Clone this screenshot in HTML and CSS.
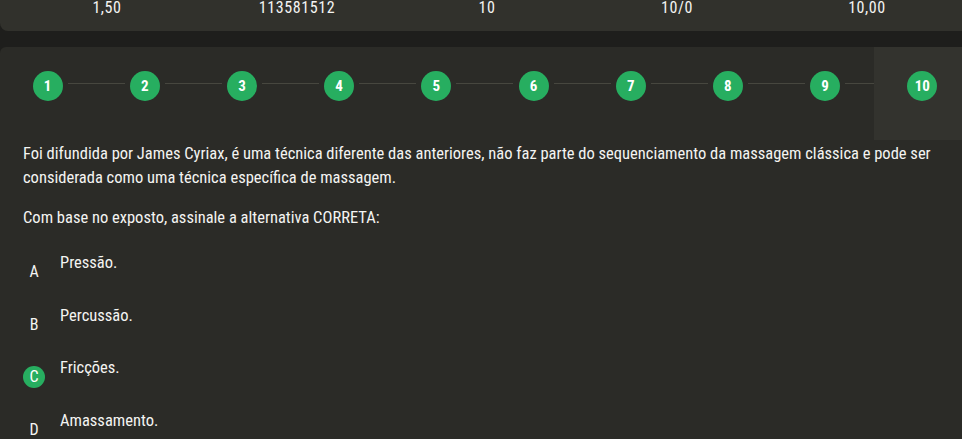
FILE: index.html
```html
<!DOCTYPE html>
<html lang="pt-BR">
<head>
  <meta charset="UTF-8" />
  <meta name="viewport" content="width=device-width, initial-scale=1.0"/>
  <title>Avaliação</title>
  <link rel="stylesheet" href="styles.css">
</head>
<body>
  <div class="summary">
    <div class="summary-cell">1,50</div>
    <div class="summary-cell">113581512</div>
    <div class="summary-cell">10</div>
    <div class="summary-cell">10/0</div>
    <div class="summary-cell">10,00</div>
  </div>

  <div class="quiz-card">
    <div class="steps">
      <div class="step"><span class="step-num">1</span></div>
      <div class="step"><span class="step-num">2</span></div>
      <div class="step"><span class="step-num">3</span></div>
      <div class="step"><span class="step-num">4</span></div>
      <div class="step"><span class="step-num">5</span></div>
      <div class="step"><span class="step-num">6</span></div>
      <div class="step"><span class="step-num">7</span></div>
      <div class="step"><span class="step-num">8</span></div>
      <div class="step"><span class="step-num">9</span></div>
      <div class="step active"><span class="step-num">10</span></div>
    </div>

    <div class="question">
      <p>Foi difundida por James Cyriax, é uma técnica diferente das anteriores, não faz parte do sequenciamento da massagem clássica e pode ser considerada como uma técnica específica de massagem.</p>
      <p>Com base no exposto, assinale a alternativa CORRETA:</p>

      <ul class="options">
        <li class="option"><span class="letter">A</span><span class="option-text">Pressão.</span></li>
        <li class="option"><span class="letter">B</span><span class="option-text">Percussão.</span></li>
        <li class="option selected"><span class="letter">C</span><span class="option-text">Fricções.</span></li>
        <li class="option"><span class="letter">D</span><span class="option-text">Amassamento.</span></li>
      </ul>
    </div>
  </div>
</body>
</html>
```

FILE: styles.css
```css
body {
  margin: 0;
  background: #1e1e1c;
  color: #f4f4f2;
  font-family: 'Roboto Condensed', 'Roboto', sans-serif;
  overflow: hidden;
  height: 439px;
}

.summary {
  display: flex;
  height: 31px;
  padding-left: 12px;
  background: #31312c;
  border-radius: 0 0 0 8px;
}

.summary-cell {
  flex: 0 0 190px;
  text-align: center;
  font-size: 16px;
  line-height: 15px;
  letter-spacing: 0.6px;
}

.quiz-card {
  margin-top: 16px;
  background: #2b2b27;
  border-radius: 6px 0 0 0;
  height: 392px;
}

.steps {
  display: flex;
  width: 972px;
  height: 93px;
  margin-left: -1px;
}

.step {
  flex: 0 0 97.2px;
  position: relative;
  display: flex;
  justify-content: center;
  padding-top: 24px;
  box-sizing: border-box;
}

.step::after {
  content: '';
  position: absolute;
  top: 36px;
  left: calc(50% + 20px);
  width: 57px;
  height: 1px;
  background: #47473f;
}

.step:last-child::after {
  display: none;
}

.step.active {
  background: #33332e;
}

.step-num {
  width: 30px;
  height: 30px;
  border-radius: 50%;
  background: #27ae60;
  color: #fff;
  font-weight: bold;
  font-size: 15px;
  display: flex;
  align-items: center;
  justify-content: center;
  position: relative;
  z-index: 1;
}

.question {
  padding: 2px 23px 0;
  font-size: 16.5px;
  line-height: 24px;
}

.question p {
  margin: 0 0 16px;
}

.options {
  list-style: none;
  margin: 21px 0 0;
  padding: 0;
  display: flex;
  flex-direction: column;
  gap: 20.5px;
}

.option {
  display: flex;
  gap: 15px;
  align-items: flex-start;
}

.letter {
  width: 22px;
  height: 22px;
  margin-top: 10px;
  border-radius: 50%;
  display: flex;
  align-items: center;
  justify-content: center;
  font-size: 16px;
  line-height: 22px;
}

.option.selected .letter {
  background: #27ae60;
  color: #fff;
}
```
